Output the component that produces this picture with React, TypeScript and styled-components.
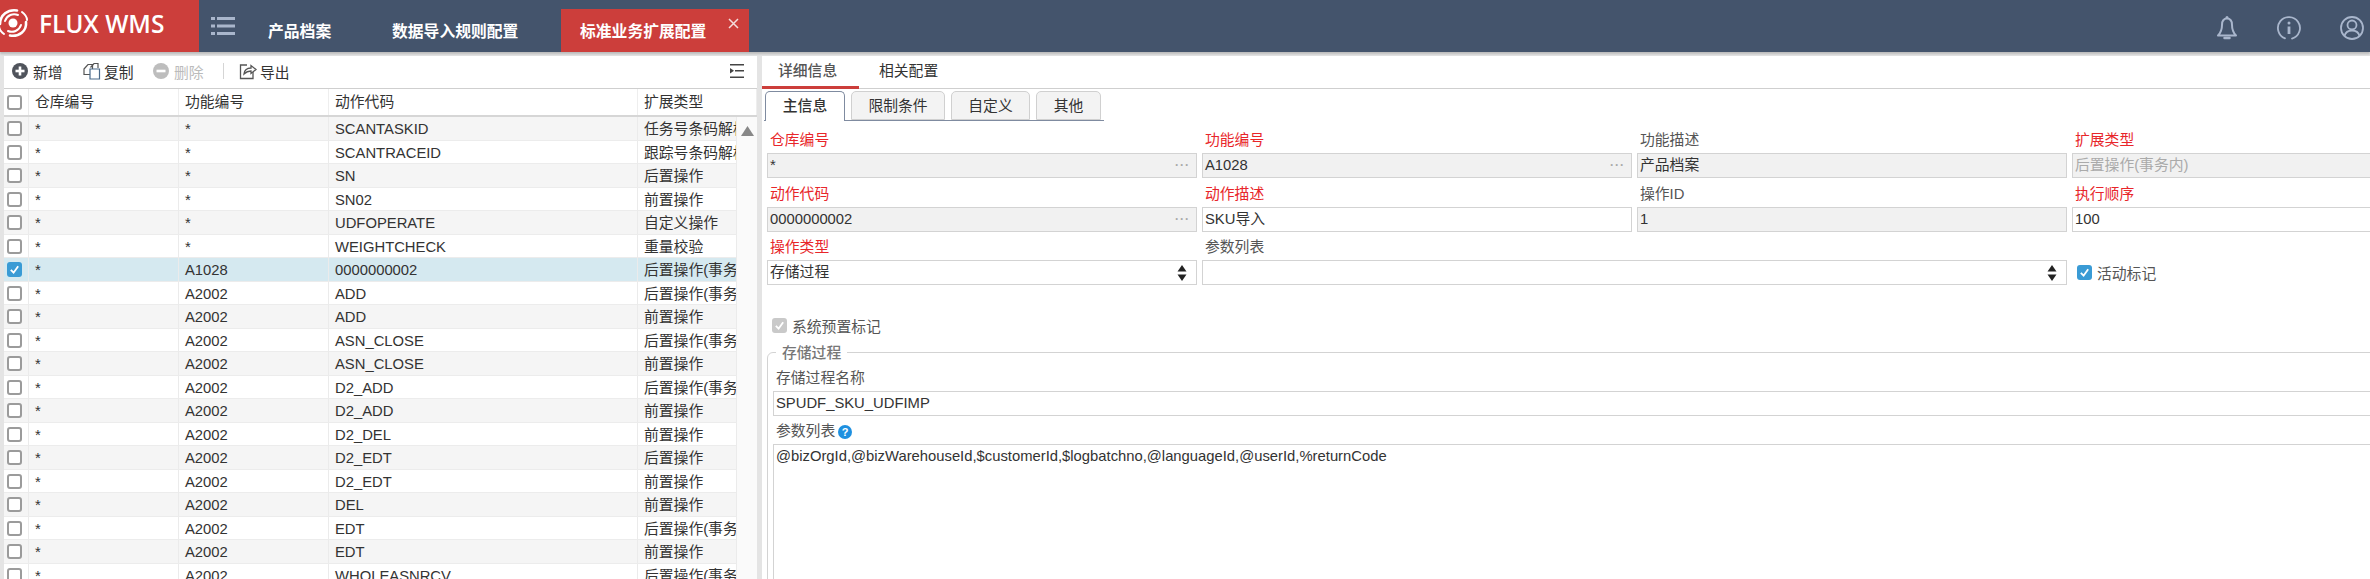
import styled, { createGlobalStyle } from "styled-components";

const GlobalStyle = createGlobalStyle`
  html, body {
    margin: 0;
    padding: 0;
    width: 2370px;
    height: 579px;
    overflow: hidden;
    background: #e4e4e4;
    font-family: "Liberation Sans", "Noto Sans CJK SC", sans-serif;
    font-size: 14.8px;
    color: #333;
  }
  * { box-sizing: border-box; }
`;

const Page = styled.div`
  width: 2370px;
  height: 579px;
  overflow: hidden;
  display: flex;
  flex-direction: column;
`;

/* top bar */
const TopBar = styled.header`
  height: 52px;
  flex: none;
  display: flex;
  background: #44546c;
  box-shadow: 0 2px 2px #bbb;
`;
const Logo = styled.div`
  width: 199px;
  height: 52px;
  background: #cc3e3b;
  display: flex;
  align-items: center;
  padding: 0 0 6px 0;
  color: #fff;
  overflow: hidden;
`;
const LogoText = styled.span`
  font-family: "Open Sans", sans-serif;
  font-size: 24.5px;
  font-weight: 600;
  margin-left: 10px;
  white-space: nowrap;
`;
const MenuButton = styled.div`
  width: 69px;
  padding-left: 12px;
  display: flex;
  align-items: center;
  padding-bottom: 0;
`;
const NavTab = styled.div<{ $w: number }>`
  width: ${(p) => p.$w}px;
  color: #fff;
  font-size: 15.8px;
  font-weight: 700;
  padding-top: 19px;
  white-space: nowrap;
`;
const ActiveTab = styled.div`
  width: 188px;
  height: 43px;
  margin-top: 9px;
  background: #cc3e3b;
  color: #fff;
  font-size: 15.8px;
  font-weight: 700;
  padding: 10px 0 0 19px;
  position: relative;
  white-space: nowrap;
`;
const CloseX = styled.span`
  position: absolute;
  top: 9px;
  right: 10px;
  display: flex;
`;
const TopIcons = styled.div`
  margin-left: auto;
  display: flex;
  align-items: center;
  gap: 39px;
  padding-top: 4px;
  margin-right: 6px;
  color: #a9b6cc;
`;

/* main split */
const Main = styled.div`
  margin-top: 4px;
  flex: 1;
  min-height: 0;
  display: flex;
  padding-left: 4px;
`;
const LeftPanel = styled.section`
  width: 753px;
  flex: none;
  background: #fff;
  display: flex;
  flex-direction: column;
  overflow: hidden;
`;
const RightPanel = styled.section`
  margin-left: 5px;
  flex: 1;
  min-width: 0;
  background: #fff;
  overflow: hidden;
`;

const Toolbar = styled.div`
  height: 33px;
  flex: none;
  display: flex;
  align-items: center;
  padding: 0 0 2px 8px;
  border-bottom: 1px solid #cfcfcf;
`;
const ToolButton = styled.div<{ $w: number; $gap: number; $off?: boolean }>`
  width: ${(p) => p.$w}px;
  display: flex;
  align-items: center;
  gap: ${(p) => p.$gap}px;
  white-space: nowrap;
  color: ${(p) => (p.$off ? "#bbb" : "#333")};
`;
const ToolSep = styled.div`
  width: 1px;
  height: 16px;
  background: #d5d5d5;
  margin: 0 15px 0 0;
`;
const CollapseIcon = styled.div`
  margin-left: auto;
  margin-right: 13px;
  display: flex;
`;

const gridCols = "25px 150px 150px 309px 1fr";
const HeadRow = styled.div`
  height: 28px;
  flex: none;
  display: grid;
  grid-template-columns: ${gridCols};
  border-bottom: 2px solid #d6d6d6;
`;
const HeadCell = styled.div`
  border-right: 1px solid #eee;
  padding-left: 6px;
  line-height: 26px;
  white-space: nowrap;
  display: flex;
  align-items: center;
`;
const TableBody = styled.div`
  flex: 1;
  min-height: 0;
  display: flex;
  overflow: hidden;
`;
const Rows = styled.div`
  width: 733px;
  flex: none;
`;
const Row = styled.div<{ $bg: string }>`
  height: 23.5px;
  display: grid;
  grid-template-columns: ${gridCols};
  background: ${(p) => p.$bg};
  border-bottom: 1px solid #ececec;
`;
const Cell = styled.div`
  border-right: 1px solid #ebebeb;
  padding-left: 6px;
  line-height: 25px;
  height: 23px;
  white-space: nowrap;
  overflow: hidden;
  color: #333;
`;
const CheckCell = styled.div`
  border-right: 1px solid #ebebeb;
  display: flex;
  align-items: center;
  justify-content: center;
  padding-right: 4px;
`;
const Check = styled.span<{ $on?: boolean; $off?: boolean }>`
  width: 15px;
  height: 15px;
  flex: none;
  border-radius: 3px;
  display: inline-flex;
  align-items: center;
  justify-content: center;
  border: ${(p) => (p.$on ? "none" : p.$off ? "none" : "2px solid #9b9b9b")};
  background: ${(p) => (p.$on ? "#3a9bd5" : p.$off ? "#c9c9c9" : "#fff")};
`;
const ScrollGutter = styled.div`
  width: 20px;
  flex: none;
  background: #fafafa;
  display: flex;
  justify-content: center;
  padding-top: 9px;
`;

/* right side */
const DetailTabs = styled.div`
  height: 33px;
  display: flex;
  border-bottom: 1px solid #cfcfcf;
`;
const DetailTab = styled.div<{ $active?: boolean }>`
  width: ${(p) => (p.$active ? "97px" : "auto")};
  padding-left: ${(p) => (p.$active ? "16px" : "20px")};
  line-height: 30px;
  color: ${(p) => (p.$active ? "#555" : "#333")};
  font-weight: ${(p) => (p.$active ? 500 : 400)};
  border-bottom: ${(p) => (p.$active ? "3px solid #cc3e3b" : "none")};
  height: 33px;
  white-space: nowrap;
`;
const SubTabs = styled.div`
  display: flex;
  gap: 6px;
  width: 340px;
  height: 30px;
  margin: 2px 0 0 2px;
  padding-left: 1px;
  border-bottom: 1px solid #7f8ba0;
`;
const SubTab = styled.div<{ $w: number; $active?: boolean }>`
  width: ${(p) => p.$w}px;
  height: ${(p) => (p.$active ? "30px" : "29px")};
  text-align: center;
  line-height: 29px;
  border: 1px solid ${(p) => (p.$active ? "#7f8ba0" : "#d0d0d0")};
  border-bottom: ${(p) => (p.$active ? "none" : "1px solid #d0d0d0")};
  border-radius: 5px 5px 0 0;
  background: ${(p) => (p.$active ? "#fff" : "#f3f3f3")};
  font-weight: ${(p) => (p.$active ? 500 : 400)};
`;
const FormGrid = styled.div`
  display: grid;
  grid-template-columns: repeat(4, 430px);
  grid-auto-rows: 53.5px;
  column-gap: 5px;
  padding: 6px 0 0 5px;
  width: 1800px;
`;
const Field = styled.div`
  display: flex;
  flex-direction: column;
`;
const WideField = styled(Field)`
  grid-column: span 2;
`;
const Label = styled.div<{ $req?: boolean }>`
  height: 26px;
  line-height: 28px;
  padding-left: 3px;
  color: ${(p) => (p.$req ? "#e8262a" : "#555")};
  white-space: nowrap;
  display: flex;
  align-items: center;
  gap: 3px;
`;
const Box = styled.div<{ $off?: boolean; $dim?: boolean }>`
  height: 25px;
  border: 1px solid #d3d3d3;
  background: ${(p) => (p.$off ? "#f1f1f1" : "#fff")};
  color: ${(p) => (p.$dim ? "#aaa" : "#333")};
  padding: 0 4px 0 2px;
  line-height: 23px;
  display: flex;
  justify-content: space-between;
  align-items: center;
  white-space: nowrap;
`;
const Dots = styled.span`
  color: #aaa;
  font-size: 12px;
  font-weight: 700;
  letter-spacing: 1px;
  padding-right: 2px;
`;
const SpinnerIcon = styled.svg`
  margin-right: 5px;
`;
const CheckLine = styled.div`
  display: flex;
  align-items: center;
  gap: 5px;
  color: #555;
  white-space: nowrap;
`;
const ActiveCheck = styled(CheckLine)`
  height: 25px;
  margin: 26px 0 0 5px;
`;
const SystemCheck = styled(CheckLine)`
  height: 20px;
  margin: 0 0 0 10px;
`;
const FormBottom = styled.div`
  padding-top: 28px;
`;
const Group = styled.fieldset`
  margin: 8px 0 0 5px;
  padding: 0 0 0 5px;
  width: 1800px;
  height: 260px;
  border: 1px solid #d3d3d3;
  border-radius: 6px 0 0 0;
`;
const GroupTitle = styled.legend`
  margin-left: 3px;
  padding: 0 6px;
  color: #777;
  font-weight: 500;
  line-height: 18px;
`;
const InnerLabel = styled(Label)`
  height: 25px;
  margin-top: 4px;
  line-height: 25px;
`;
const InnerLabelNext = styled(InnerLabel)`
  height: 28px;
  margin-top: 0;
  padding-top: 4px;
`;
const ParamArea = styled.div`
  height: 200px;
  border: 1px solid #d3d3d3;
  padding: 0 2px;
  line-height: 22px;
  white-space: nowrap;
`;
const HelpDot = styled.span`
  width: 14px;
  height: 14px;
  border-radius: 50%;
  background: #1e90e0;
  color: #fff;
  font-size: 11px;
  font-weight: 700;
  line-height: 14px;
  text-align: center;
`;

const Tick = ({ size = 11 }: { size?: number }) => (
  <svg width={size} height={size} viewBox="0 0 12 12">
    <path d="M2 6.5 5 9.5 10 2.5" fill="none" stroke="#fff" strokeWidth="2" />
  </svg>
);

const Spinner = () => (
  <SpinnerIcon width="10" height="16" viewBox="0 0 10 16">
    <path d="M5 0 9.5 6.5H.5Z" fill="#222" />
    <path d="M5 16 9.5 9.5H.5Z" fill="#222" />
  </SpinnerIcon>
);

const SwirlLogo = () => (
  <svg width="32" height="32" viewBox="0 0 32 32" style={{ marginLeft: -3, flex: "none" }}>
    <g fill="none" stroke="#fff" strokeLinecap="round">
      <circle cx="16" cy="16" r="4.5" fill="#fff" stroke="none" />
      <path d="M3 17C3 8 11 2 20 3.5" strokeWidth="2.6" />
      <path d="M8 14C10 8 16 6 21 8" strokeWidth="2" />
      <path d="M29 15C30 24 22 30 13 28.5" strokeWidth="2.6" />
      <path d="M24 18C22 24 16 26 11 24" strokeWidth="2" />
      <path d="M25 5C29 8 30 11 30 13" strokeWidth="2" />
      <path d="M7 27C3 24 2 21 2 19" strokeWidth="2" />
    </g>
  </svg>
);

const MenuGlyph = () => (
  <svg width="24" height="20" viewBox="0 0 24 20" fill="#a9b6cc">
    <rect x="0" y="1" width="4" height="3" />
    <rect x="6" y="1" width="18" height="3" />
    <rect x="0" y="8.5" width="4" height="3" />
    <rect x="6" y="8.5" width="18" height="3" />
    <rect x="0" y="16" width="4" height="3" />
    <rect x="6" y="16" width="18" height="3" />
  </svg>
);

const CrossGlyph = () => (
  <svg width="11" height="11" viewBox="0 0 11 11">
    <path d="M1 1 10 10M10 1 1 10" fill="none" stroke="#f4dcdc" strokeWidth="1.5" />
  </svg>
);

const BellGlyph = () => (
  <svg width="22" height="26" viewBox="0 0 22 26" fill="none" stroke="currentColor" strokeWidth="2">
    <path d="M11 3.5C7 3.5 6 7 6 10 6 15 4.5 18 2 20.5H20C17.500 18 16 15 16 10 16 7 15 3.5 11 3.5Z" strokeLinejoin="round" />
    <circle cx="11" cy="2.500" r="1.500" fill="currentColor" stroke="none" />
    <path d="M8.500 23H13.500" strokeLinecap="round" strokeWidth="2.500" />
  </svg>
);

const InfoGlyph = () => (
  <svg width="24" height="24" viewBox="0 0 24 24" fill="none" stroke="currentColor" strokeWidth="1.800">
    <path d="M8 22.300A11 11 0 1 1 15 22.600" strokeLinecap="round" />
    <circle cx="12" cy="7" r="1.500" fill="currentColor" stroke="none" />
    <path d="M12 10.500V18" strokeWidth="2.800" />
  </svg>
);

const UserGlyph = () => (
  <svg width="24" height="24" viewBox="0 0 24 24" fill="none" stroke="currentColor" strokeWidth="1.800">
    <circle cx="12" cy="12" r="11" />
    <circle cx="12" cy="9" r="4.500" />
    <path d="M4.500 20C5.500 16 8.500 14.500 12 14.500S18.500 16 19.500 20" />
  </svg>
);

const PlusGlyph = ({ minus }: { minus?: boolean }) => (
  <svg width="16" height="16" viewBox="0 0 16 16">
    <circle cx="8" cy="8" r="8" fill={minus ? "#bdbdbd" : "#50545c"} />
    <rect x="3.500" y="6.700" width="9" height="2.600" fill="#fff" />
    {!minus && <rect x="6.700" y="3.500" width="2.600" height="9" fill="#fff" />}
  </svg>
);

const CopyGlyph = () => (
  <svg width="18" height="18" viewBox="0 0 18 18" fill="#fff" stroke="#555" strokeWidth="1.200">
    <path d="M1 7 5 2.500H9.500V12.500H1Z" />
    <path d="M7.500 5.500 11 1.500H15V6" fill="none" />
    <path d="M7 7H16.500V17H7Z" stroke="#4a6a8a" />
  </svg>
);

const ExportGlyph = () => (
  <svg width="18" height="18" viewBox="0 0 18 18" fill="none" stroke="#555" strokeWidth="1.300">
    <path d="M8 3H1.500V16.500H14V10" />
    <path d="M5 12C5.500 8 8 6 12 6V3.500L17 7.500 12 11.500V9C9 9 7 10 5 12Z" fill="#fff" />
  </svg>
);

const CollapseGlyph = () => (
  <svg width="14" height="14" viewBox="0 0 14 14" fill="#444">
    <rect x="0" y="0" width="14" height="1.500" />
    <rect x="5" y="6" width="9" height="1.500" />
    <rect x="0" y="12.500" width="14" height="1.500" />
    <path d="M0 4 4 6.700 0 9.500Z" />
  </svg>
);

const AFTER_TX = "后置操作(事务内)";
const AFTER = "后置操作";
const BEFORE = "前置操作";

const rows: [string, string, string][] = [
  ["*", "SCANTASKID", "任务号条码解析"],
  ["*", "SCANTRACEID", "跟踪号条码解析"],
  ["*", "SN", AFTER],
  ["*", "SN02", BEFORE],
  ["*", "UDFOPERATE", "自定义操作"],
  ["*", "WEIGHTCHECK", "重量校验"],
  ["A1028", "0000000002", AFTER_TX],
  ["A2002", "ADD", AFTER_TX],
  ["A2002", "ADD", BEFORE],
  ["A2002", "ASN_CLOSE", AFTER_TX],
  ["A2002", "ASN_CLOSE", BEFORE],
  ["A2002", "D2_ADD", AFTER_TX],
  ["A2002", "D2_ADD", BEFORE],
  ["A2002", "D2_DEL", BEFORE],
  ["A2002", "D2_EDT", AFTER],
  ["A2002", "D2_EDT", BEFORE],
  ["A2002", "DEL", BEFORE],
  ["A2002", "EDT", AFTER_TX],
  ["A2002", "EDT", BEFORE],
  ["A2002", "WHOLEASNRCV", AFTER_TX],
];

const SELECTED = 6;

function rowColor(i: number) {
  if (i === SELECTED) return "#d5e9f0";
  return i % 2 === 0 ? "#f5f5f5" : "#fff";
}

export default function App() {
  return (
    <Page>
      <GlobalStyle />
      <TopBar>
        <Logo>
          <SwirlLogo />
          <LogoText>FLUX WMS</LogoText>
        </Logo>
        <MenuButton>
          <MenuGlyph />
        </MenuButton>
        <NavTab $w={124}>产品档案</NavTab>
        <NavTab $w={169}>数据导入规则配置</NavTab>
        <ActiveTab>
          标准业务扩展配置
          <CloseX>
            <CrossGlyph />
          </CloseX>
        </ActiveTab>
        <TopIcons>
          <BellGlyph />
          <InfoGlyph />
          <UserGlyph />
        </TopIcons>
      </TopBar>
      <Main>
        <LeftPanel>
          <Toolbar>
            <ToolButton $w={71} $gap={5}>
              <PlusGlyph />
              新增
            </ToolButton>
            <ToolButton $w={70} $gap={3}>
              <CopyGlyph />
              复制
            </ToolButton>
            <ToolButton $w={70} $gap={5} $off>
              <PlusGlyph minus />
              删除
            </ToolButton>
            <ToolSep />
            <ToolButton $w={60} $gap={3}>
              <ExportGlyph />
              导出
            </ToolButton>
            <CollapseIcon>
              <CollapseGlyph />
            </CollapseIcon>
          </Toolbar>
          <HeadRow>
            <CheckCell>
              <Check />
            </CheckCell>
            <HeadCell>仓库编号</HeadCell>
            <HeadCell>功能编号</HeadCell>
            <HeadCell>动作代码</HeadCell>
            <HeadCell>扩展类型</HeadCell>
          </HeadRow>
          <TableBody>
            <Rows>
              {rows.map(([fn, code, type], i) => (
                <Row key={i} $bg={rowColor(i)}>
                  <CheckCell>
                    <Check $on={i === SELECTED}>{i === SELECTED && <Tick />}</Check>
                  </CheckCell>
                  <Cell>*</Cell>
                  <Cell>{fn}</Cell>
                  <Cell>{code}</Cell>
                  <Cell>{type}</Cell>
                </Row>
              ))}
            </Rows>
            <ScrollGutter>
              <svg width="13" height="10" viewBox="0 0 13 10">
                <path d="M6.500 0 13 10H0Z" fill="#888" />
              </svg>
            </ScrollGutter>
          </TableBody>
        </LeftPanel>
        <RightPanel>
          <DetailTabs>
            <DetailTab $active>详细信息</DetailTab>
            <DetailTab>相关配置</DetailTab>
          </DetailTabs>
          <SubTabs>
            <SubTab $w={80} $active>主信息</SubTab>
            <SubTab $w={94}>限制条件</SubTab>
            <SubTab $w={79}>自定义</SubTab>
            <SubTab $w={65}>其他</SubTab>
          </SubTabs>
          <FormGrid>
            <Field>
              <Label $req>仓库编号</Label>
              <Box $off>*<Dots>···</Dots></Box>
            </Field>
            <Field>
              <Label $req>功能编号</Label>
              <Box $off>A1028<Dots>···</Dots></Box>
            </Field>
            <Field>
              <Label>功能描述</Label>
              <Box $off>产品档案</Box>
            </Field>
            <Field>
              <Label $req>扩展类型</Label>
              <Box $off $dim>后置操作(事务内)</Box>
            </Field>
            <Field>
              <Label $req>动作代码</Label>
              <Box $off>0000000002<Dots>···</Dots></Box>
            </Field>
            <Field>
              <Label $req>动作描述</Label>
              <Box>SKU导入</Box>
            </Field>
            <Field>
              <Label>操作ID</Label>
              <Box $off>1</Box>
            </Field>
            <Field>
              <Label $req>执行顺序</Label>
              <Box>100</Box>
            </Field>
            <Field>
              <Label $req>操作类型</Label>
              <Box>存储过程<Spinner /></Box>
            </Field>
            <WideField>
              <Label>参数列表</Label>
              <Box><span /><Spinner /></Box>
            </WideField>
            <Field>
              <ActiveCheck>
                <Check $on><Tick /></Check>
                活动标记
              </ActiveCheck>
            </Field>
          </FormGrid>
          <FormBottom>
            <SystemCheck>
              <Check $off><Tick /></Check>
              系统预置标记
            </SystemCheck>
            <Group>
              <GroupTitle>存储过程</GroupTitle>
              <InnerLabel>存储过程名称</InnerLabel>
              <Box>SPUDF_SKU_UDFIMP</Box>
              <InnerLabelNext>
                参数列表
                <HelpDot>?</HelpDot>
              </InnerLabelNext>
              <ParamArea>@bizOrgId,@bizWarehouseId,$customerId,$logbatchno,@languageId,@userId,%returnCode</ParamArea>
            </Group>
          </FormBottom>
        </RightPanel>
      </Main>
    </Page>
  );
}
